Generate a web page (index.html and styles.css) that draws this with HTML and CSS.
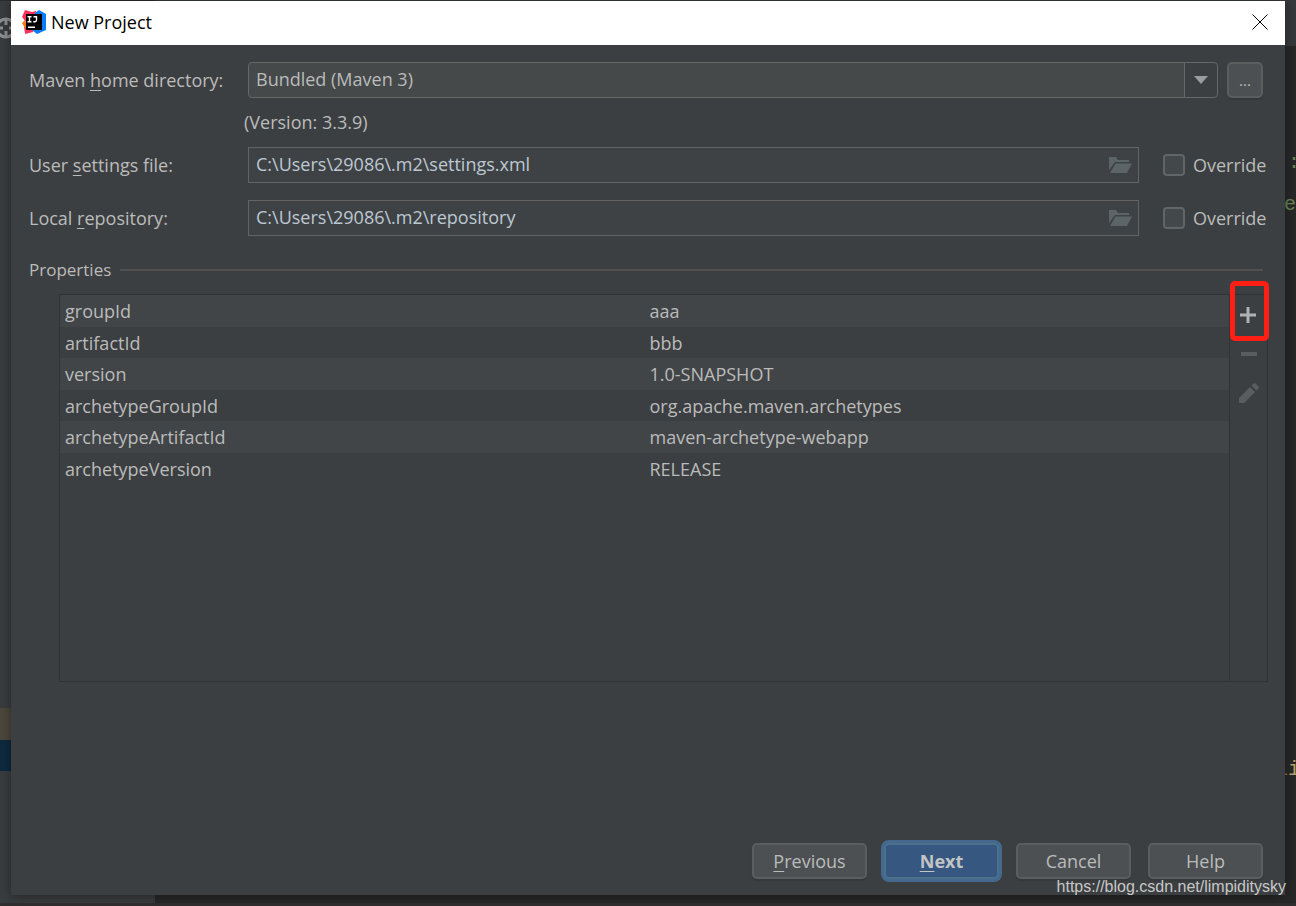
FILE: index.html
```html
<!DOCTYPE html>
<html lang="en">
<head>
<meta charset="utf-8">
<title>New Project</title>
<link rel="stylesheet" href="styles.css">
</head>
<body>
<div class="ide" aria-hidden="true">
  <div class="ide-tree"><svg class="target" viewBox="0 0 24 24" width="24" height="24"><circle cx="12" cy="12" r="9"/><path d="M12 2v7M12 15v7M2 12h7M15 12h7"/></svg><i class="row-tan"></i><i class="row-blue"></i></div>
  <div class="ide-editor"><span class="code code-a">:</span><span class="code code-b">re</span><span class="code code-c"><b>l</b>i</span></div>
</div>
<main class="dialog">
  <header class="titlebar">
    <svg class="logo" viewBox="0 0 24 24" width="24" height="24">
      <path fill="#fe315d" d="M3 0l7 2 4-1 1 5-8 13-4 4-1-6 2-5-4-5z"/>
      <path fill="#f97a12" d="M0 13l3-3 3 9-3-1z"/>
      <path fill="#fe315d" d="M3 19h9l-1 3-8 2z"/>
      <path fill="#087cfa" d="M13 3l4-3 7 4v16l-9 4-5-4z"/>
      <path fill="#000" d="M4 4h16v16H4z"/>
      <path fill="none" stroke="#fff" stroke-width="1.4" d="M5.500 6.700h4M7.500 6.700v5M5.500 11.700h4M11.500 6.700h3v3.600q0 1.400-1.500 1.400h-1.800M6 17.300h7"/>
    </svg>
    <h1>New Project</h1>
    <button class="close" aria-label="Close"><svg viewBox="0 0 16 16" width="16" height="16"><path d="M.5.5l15 15M15.500.5l-15 15"/></svg></button>
  </header>
  <form class="content" onsubmit="return false">
    <div class="row">
      <label class="caption" for="home">Maven <u>h</u>ome directory:</label>
      <div class="combo">
        <select id="home"><option>Bundled (Maven 3)</option></select>
        <span class="arrow"><svg viewBox="0 0 14 8" width="14" height="8"><path d="M0 0h14L7 8z"/></svg></span>
      </div>
      <button class="btn browse" type="button" aria-label="Browse">...</button>
    </div>
    <p class="version">(Version: 3.3.9)</p>
    <div class="row">
      <label class="caption" for="settings">User <u>s</u>ettings file:</label>
      <div class="field"><input id="settings" type="text" value="C:\Users\29086\.m2\settings.xml">
        <svg class="folder" viewBox="0 0 24 18" width="24" height="18"><path d="M1 14V1h7l2 3h11v2H7z"/><path d="M7.500 7.500H24L19 17H2z"/></svg></div>
      <label class="override"><input type="checkbox">Override</label>
    </div>
    <div class="row repo">
      <label class="caption" for="repo">Local <u>r</u>epository:</label>
      <div class="field"><input id="repo" type="text" value="C:\Users\29086\.m2\repository">
        <svg class="folder" viewBox="0 0 24 18" width="24" height="18"><path d="M1 14V1h7l2 3h11v2H7z"/><path d="M7.500 7.500H24L19 17H2z"/></svg></div>
      <label class="override"><input type="checkbox">Override</label>
    </div>
    <h2 class="section">Properties</h2>
    <div class="props">
      <div class="grid">
        <table>
          <tbody>
            <tr><td>groupId</td><td>aaa</td></tr>
            <tr><td>artifactId</td><td>bbb</td></tr>
            <tr><td>version</td><td>1.0-SNAPSHOT</td></tr>
            <tr><td>archetypeGroupId</td><td>org.apache.maven.archetypes</td></tr>
            <tr><td>archetypeArtifactId</td><td>maven-archetype-webapp</td></tr>
            <tr><td>archetypeVersion</td><td>RELEASE</td></tr>
          </tbody>
        </table>
      </div>
      <div class="tools">
        <button class="tool add" type="button" aria-label="Add"><svg viewBox="0 0 20 20" width="20" height="20"><path d="M8.500 2h3v6.500H18v3h-6.500V18h-3v-6.500H2v-3h6.500z"/></svg></button>
        <button class="tool" type="button" aria-label="Remove"><svg viewBox="0 0 20 20" width="20" height="20"><path d="M2 8h16v4H2z"/></svg></button>
        <button class="tool" type="button" aria-label="Edit"><svg viewBox="0 0 20 20" width="20" height="20"><path d="M0 20v-5L11 4l5 5L5 20zM12.500 2.500L14 1q1.500-1.500 3 0l2 2q1.500 1.500 0 3l-1.500 1.500z"/></svg></button>
      </div>
    </div>
    <div class="actions">
      <button class="btn" type="button"><u>P</u>revious</button>
      <button class="btn primary" type="submit"><u>N</u>ext</button>
      <button class="btn" type="button">Cancel</button>
      <button class="btn" type="button">Help</button>
    </div>
  </form>
</main>
<div class="watermark">https://blog.csdn.net/limpiditysky</div>
</body>
</html>
```
FILE: styles.css
```css
* { box-sizing: border-box; }
body {
  margin: 0;
  min-height: 100vh;
  padding: 1px 11px 11px;
  display: flex;
  position: relative;
  overflow: hidden;
  background: #2b2b2b;
  color: #bbbbbb;
  font: 18px/24px "Open Sans", "Noto Sans", sans-serif;
}
button, input, select { font: inherit; color: inherit; margin: 0; }
u { text-underline-offset: 3px; text-decoration-thickness: 1px; }

/* IDE window behind the dialog */
.ide { position: absolute; inset: 0; display: flex; border-bottom: 3px solid #302e2f; }
.ide-tree { position: relative; width: 155px; background: #393c3e; border-top: 1px solid #2b2b2b; }
.ide-tree i { position: absolute; left: 0; width: 100%; }
.row-tan { top: 707px; height: 32px; background: #4b473c; }
.row-blue { top: 739px; height: 31px; background: #0d293e; }
.target { position: absolute; left: -6px; top: 15px; fill: none; stroke: #8b8e90; stroke-width: 3; }
.ide-editor { position: relative; flex: 1; background: #282828; border-top: 46px solid #36393b; }
.code { position: absolute; right: 0; font: 20px/24px "Liberation Mono", monospace; color: #6a8759; }
.code-a { right: -4px; top: 105px; }
.code-b { top: 147px; }
.code-c { right: -4px; top: 712px; color: #b5a56b; }
.code-c b { font-weight: 400; color: #95693a; }

.dialog {
  position: relative;
  flex: 1;
  display: flex;
  flex-direction: column;
  background: #3c3f41;
  box-shadow: 0 1px 10px rgba(0, 0, 0, .4);
}
.titlebar {
  height: 44px;
  padding: 0 17px 2px 11px;
  display: flex;
  align-items: center;
  background: #fff;
  color: #000;
}
.titlebar h1 { flex: 1; margin: 0 0 0 5px; font-size: 18px; font-weight: 400; }
.close { width: 16px; height: 16px; padding: 0; border: 0; background: none; display: flex; }
.close path { stroke: #000; stroke-width: 1; }

.content { flex: 1; display: flex; flex-direction: column; padding: 17px 18px 16px; }
.row { display: flex; align-items: center; height: 36px; }
.caption { width: 219px; white-space: nowrap; }
.combo { flex: 1; height: 36px; display: flex; border: 1px solid #666868; border-radius: 4px; background: #45494a; }
.combo select {
  flex: 1;
  appearance: none;
  border: 0;
  padding: 0 7px 2px;
  background: transparent;
}
.arrow { width: 33px; display: flex; align-items: center; justify-content: center; border-left: 1px solid #666868; border-radius: 0 4px 4px 0; background: #3c3f41; }
.arrow path { fill: #9a9da0; }
.btn {
  height: 36px;
  width: 115px;
  padding: 0;
  border: 2px solid #5b5e5f;
  border-radius: 5px;
  background: #4c5052;
  box-shadow: 0 2px 1px #36393b;
}
.btn.browse { width: 36px; margin: 0 4px 0 9px; font-size: 15px; }
.version { margin: 12px 0 13px 215px; }
.field { flex: 1; height: 36px; display: flex; align-items: center; padding-right: 6px; border: 1px solid #646464; background: #3f4244; }
.field input { flex: 1; min-width: 0; height: 32px; padding: 0 7px 2px; border: 0; background: transparent; color: #bdc8d3; }
.folder { fill: #5c6467; }
.override { display: flex; align-items: center; gap: 8px; width: 105px; margin-left: 24px; margin-right: -1px; white-space: nowrap; }
.override input { appearance: none; width: 22px; height: 22px; border: 2px solid #626566; border-radius: 4px; background: #43484a; }
.repo { margin-top: 17px; }
.section { display: flex; align-items: center; gap: 9px; margin: 22px 4px 0 0; font-size: 17px; line-height: 24px; font-weight: 400; }
.section::after { content: ""; flex: 1; height: 2px; background: #515151; }

.props { flex: 1; display: flex; min-height: 240px; margin: 12px -1px 0 30px; border: 1px solid #323232; }
.grid { flex: 1; }
.grid table { width: 100%; border-collapse: collapse; table-layout: fixed; }
.grid tr { height: 31px; }
.grid tr:nth-child(odd) { height: 32px; background: #414547; }
.grid td { padding: 0 5px; line-height: 24px; }
.tools { width: 38px; border-left: 1px solid #323232; display: flex; flex-direction: column; align-items: center; }
.tool { width: 38px; height: 39px; padding: 0; border: 0; background: none; display: flex; align-items: center; justify-content: center; }
.tool path { fill: #5a5c5d; }
.tool.add { width: 39px; height: 60px; margin: -14px -2px -7px 0; padding: 8px 3px 0 0; border: 5px solid #ff1f14; border-radius: 5px; }
.tool.add path { fill: #afb1b3; }

.actions { display: flex; justify-content: flex-end; gap: 17px; margin: 161px 4px 0 0; }
.btn.primary { background: #365880; border-color: #4c708c; color: #c2c4c6; font-weight: 700; box-shadow: 0 0 0 3px #43698e; }

.watermark { position: absolute; right: 10px; bottom: 9px; font: 16px/20px "Liberation Sans", Arial, sans-serif; color: #c8c8c8; }
```
